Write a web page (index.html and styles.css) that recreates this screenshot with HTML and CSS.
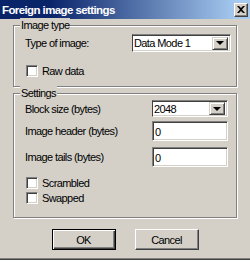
FILE: index.html
```html
<!DOCTYPE html>
<html>
<head>
  <meta name="viewport" content="width=device-width, initial-scale=1.0">
  <link rel="stylesheet" href="styles.css">
</head>
<body>

<div class="dialog">
  <div class="titlebar">
    <span class="title">Foreign image settings</span>
    <span class="close-btn">
      <svg viewBox="0 0 8 7" width="8" height="7">
        <path d="M0 0h2l2 2 2-2h2L5 3.5 8 7H6L4 5 2 7H0l3-3.5z" fill="#000"/>
      </svg>
    </span>
  </div>

  <div class="content">
    <div class="group group-type">
      <span class="legend">Image type</span>
      <div class="row">
        <span class="label">Type of image:</span>
        <div class="combo combo-type">
          <span class="combo-text">Data Mode 1</span>
          <span class="drop-btn"><span class="arrow"></span></span>
        </div>
      </div>
      <div class="check-row">
        <span class="checkbox"></span>
        <span class="label">Raw data</span>
      </div>
    </div>

    <div class="group group-settings">
      <span class="legend">Settings</span>
      <div class="row">
        <span class="label">Block size (bytes)</span>
        <div class="combo combo-block">
          <span class="combo-text">2048</span>
          <span class="drop-btn"><span class="arrow"></span></span>
        </div>
      </div>
      <div class="row row-input">
        <span class="label">Image header (bytes)</span>
        <input type="text" class="field" value="0">
      </div>
      <div class="row row-input row-tails">
        <span class="label">Image tails (bytes)</span>
        <input type="text" class="field" value="0">
      </div>
      <div class="check-row check-scrambled">
        <span class="checkbox"></span>
        <span class="label">Scrambled</span>
      </div>
      <div class="check-row check-swapped">
        <span class="checkbox"></span>
        <span class="label">Swapped</span>
      </div>
    </div>

    <div class="buttons">
      <button class="btn btn-default">OK</button>
      <button class="btn">Cancel</button>
    </div>
  </div>
</div>

</body>
</html>
```

FILE: styles.css
```css
body {
  margin: 0;
  background: #fff;
  font-family: "Liberation Sans", Arial, sans-serif;
  font-size: 11px;
  letter-spacing: -0.6px;
  color: #000;
}

.dialog {
  width: 250px;
  height: 260px;
  box-sizing: border-box;
  background: #d4d0c8;
  border-bottom: 1px solid #404040;
  box-shadow: inset 0 -1px 0 #808080;
}

.titlebar {
  height: 19px;
  display: flex;
  align-items: center;
  padding: 0 2px 0 2px;
  background: linear-gradient(to right, #0a246a 20%, #a6caf0 95%);
}

.title {
  color: #fff;
  font-weight: bold;
  font-size: 11.5px;
}

.close-btn {
  margin-left: auto;
  width: 14px;
  height: 14px;
  box-sizing: border-box;
  background: #d4d0c8;
  border: 1px solid;
  border-color: #fff #404040 #404040 #fff;
  box-shadow: inset -1px -1px 0 #808080;
  display: flex;
  align-items: center;
  justify-content: center;
}

.content {
  padding: 6px 13px 0 13px;
}

.group {
  position: relative;
  border: 1px solid #808080;
  box-shadow: inset 1px 1px 0 #fff, 1px 1px 0 #fff;
}

.legend {
  position: absolute;
  top: -8px;
  left: 6px;
  padding: 0 1px;
  line-height: 14px;
  background: #d4d0c8;
}

.group-type {
  height: 62px;
  box-sizing: border-box;
  padding: 8px 5px 0 11px;
}

.group-settings {
  margin-top: 6px;
  height: 125px;
  box-sizing: border-box;
  padding: 6px 8px 0 11px;
}

.row {
  display: flex;
  align-items: center;
  justify-content: space-between;
}

.row-input {
  margin-top: 4px;
}

.row-tails {
  margin-top: 6px;
}

.combo {
  display: flex;
  align-items: center;
  height: 18px;
  box-sizing: border-box;
  background: #fff;
  border: 1px solid;
  border-color: #808080 #fff #fff #404040;
  box-shadow: inset 0 1px 0 #404040, inset -1px -1px 0 #d4d0c8;
  padding: 2px 2px 2px 0;
}

.combo-type {
  width: 99px;
}

.combo-block {
  width: 76px;
  height: 17px;
}

.combo-text {
  flex: 1;
  padding-left: 1px;
}

.drop-btn {
  width: 16px;
  height: 13px;
  box-sizing: border-box;
  background: #d4d0c8;
  border: 1px solid;
  border-color: #d4d0c8 #404040 #404040 #d4d0c8;
  box-shadow: inset 1px 1px 0 #fff, inset -1px -1px 0 #808080;
  display: flex;
  align-items: center;
  justify-content: center;
}

.arrow {
  width: 0;
  height: 0;
  border-left: 4px solid transparent;
  border-right: 4px solid transparent;
  border-top: 4px solid #000;
}

.field {
  width: 76px;
  height: 20px;
  box-sizing: border-box;
  margin: 0;
  padding: 1px 2px 0;
  font: inherit;
  letter-spacing: inherit;
  background: #fff;
  border: 1px solid;
  border-color: #808080 #fff #fff #808080;
  box-shadow: inset 1px 1px 0 #404040, inset -1px -1px 0 #d4d0c8;
  outline: none;
}

.check-row {
  display: flex;
  align-items: center;
  gap: 4px;
  margin-top: 13px;
  padding-left: 1px;
}

.check-scrambled {
  margin-top: 10px;
}

.check-swapped {
  margin-top: 3px;
}

.checkbox {
  width: 12px;
  height: 12px;
  box-sizing: border-box;
  background: #fff;
  border: 1px solid;
  border-color: #808080 #fff #fff #808080;
  box-shadow: inset 1px 1px 0 #404040, inset -1px -1px 0 #d4d0c8;
}

.buttons {
  display: flex;
  justify-content: center;
  gap: 19px;
  margin-top: 11px;
}

.btn {
  width: 64px;
  height: 21px;
  box-sizing: border-box;
  margin: 0;
  padding: 0;
  font: inherit;
  letter-spacing: inherit;
  color: #000;
  background: #d4d0c8;
  border: 1px solid;
  border-color: #fff #404040 #404040 #fff;
  box-shadow: inset -1px -1px 0 #808080;
}

.btn-default {
  border-color: #000;
  box-shadow: inset 1px 1px 0 #fff, inset -1px -1px 0 #404040, inset -2px -2px 0 #808080;
}
```
